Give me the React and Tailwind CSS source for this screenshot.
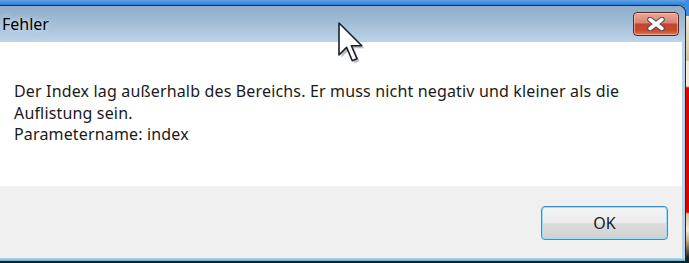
import React from "react";

function Cursor() {
  return (
    <svg
      className="absolute left-[338px] top-[22px]"
      width="28"
      height="42"
      viewBox="0 0 28 42"
    >
      <polygon
        points="2,2 2,34 9.6,26.4 15.3,39.7 20,37.8 14.4,24.8 24.8,24.8"
        fill="rgba(0,0,0,0.25)"
        transform="translate(1.5,1.5)"
      />
      <polygon
        points="1,1 1,33 8.6,25.4 14.3,38.7 19,36.8 13.4,23.8 23.8,23.8"
        fill="#ffffff"
        stroke="#1a1f2a"
        strokeWidth="1.6"
        strokeLinejoin="round"
      />
    </svg>
  );
}

function CloseButton() {
  return (
    <div className="w-[46px] h-[24px] rounded-[4px] border border-[#5a2a24] bg-[linear-gradient(to_bottom,#eaa898_0%,#d98474_45%,#c3452e_50%,#c84a30_80%,#e07a50_100%)] flex items-center justify-center shadow-[inset_0_0_0_1px_rgba(255,220,210,0.5)]">
      <svg width="20" height="14" viewBox="0 0 20 14">
        <path
          d="M4 2.5 L16 11.5 M16 2.5 L4 11.5"
          stroke="#5a4a4a"
          strokeWidth="5.5"
          strokeLinecap="round"
        />
        <path
          d="M4 2.5 L16 11.5 M16 2.5 L4 11.5"
          stroke="#ffffff"
          strokeWidth="3.5"
          strokeLinecap="round"
        />
      </svg>
    </div>
  );
}

export default function App() {
  return (
    <div
      className="w-[689px] h-[263px] overflow-hidden relative flex bg-[#3c8de0]"
      style={{ fontFamily: '"Noto Sans", "Open Sans", sans-serif' }}
    >
      <div className="w-[686px] flex flex-col">
        <div className="h-[5px] bg-[linear-gradient(to_bottom,#5ca2e8,#2f7ed6)]" />
        <div className="flex-1 flex flex-col border-t border-r border-[#1d2b3a] rounded-tr-[8px] overflow-hidden bg-[#bcd2e6]">
          <div className="h-[36px] bg-[linear-gradient(to_bottom,#8dadc9,#a3bfd8_50%,#bcd4e9)] flex items-center justify-between pr-[6px]">
            <span className="pl-[2px] text-[16px] text-black [text-shadow:0_0_6px_rgba(255,255,255,0.8)]">
              Fehler
            </span>
            <CloseButton />
          </div>
          <div className="flex-1 flex flex-col mr-[3px]">
            <div className="h-[144px] bg-white pl-[14px] pt-[39px] text-[16px] leading-[21.5px] tracking-[0.16px] text-[#1a1a1a]">
              <p>Der Index lag außerhalb des Bereichs. Er muss nicht negativ und kleiner als die</p>
              <p>Auflistung sein.</p>
              <p>Parametername: index</p>
            </div>
            <div className="flex-1 bg-[#f0f0f0] flex justify-end items-start pt-[20px] pr-[14px]">
              <button className="w-[127px] h-[34px] rounded-[4px] border border-[#3c8fc4] shadow-[inset_0_0_0_1px_#9edcf6] bg-[linear-gradient(to_bottom,#f4f4f4,#ececec_50%,#dcdcdc_52%,#d2d2d2)] text-[16px] text-[#1a1a1a] flex items-center justify-center">
                OK
              </button>
            </div>
          </div>
          <div className="h-[3px] bg-[linear-gradient(to_bottom,#b4dcea,#5ab4cc)]" />
          <div className="h-[2px] bg-[#0e1c20]" />
        </div>
      </div>
      <div className="flex-1 bg-[linear-gradient(to_bottom,#3c8de0_0px,#3c8de0_16px,#efe6cf_16px,#d8c49a_60px,#f2ead8_62px,#f2ead8_86px,#e00000_88px,#e00000_212px,#d8c49a_214px,#f0e8d8_230px,#c8b080_240px,#1a2020_258px)]" />
      <Cursor />
    </div>
  );
}
